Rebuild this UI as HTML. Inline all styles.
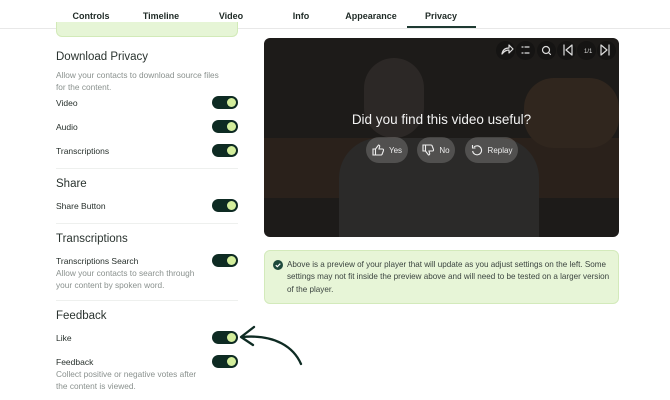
<!DOCTYPE html>
<html><head><meta charset="utf-8"><style>
*{margin:0;padding:0;box-sizing:border-box}
body{width:670px;height:400px;overflow:hidden;background:#fff;font-family:"Liberation Sans",sans-serif;color:#1f2a26;position:relative}
.a{position:absolute}
.tab{position:absolute;top:11px;width:70px;text-align:center;font-size:9px;font-weight:bold;color:#1f2a26}
.h{font-size:11.5px;color:#2a332f}
.l{font-size:8.5px;color:#27302c}
.d{font-size:8.3px;color:#8a918e;line-height:12px}
.tg{position:absolute;left:212px;width:26px;height:13px;border-radius:7px;background:#0e2b23}
.tg:after{content:"";position:absolute;right:2px;top:2px;width:9px;height:9px;border-radius:50%;background:#d3ee9c}
.hr{position:absolute;left:56px;width:182px;height:1px;background:#eef0ee}
.btn{position:absolute;top:99px;height:26px;border-radius:13px;background:rgba(255,255,255,.18);color:#eee;font-size:8px;display:flex;align-items:center;justify-content:center;gap:5px}
.ci{position:absolute;top:3px;width:19px;height:19px;border-radius:50%;background:#151413}
</style></head><body>
<div class="tab" style="left:56px">Controls</div>
<div class="tab" style="left:126px">Timeline</div>
<div class="tab" style="left:196px">Video</div>
<div class="tab" style="left:266px">Info</div>
<div class="tab" style="left:336px">Appearance</div>
<div class="tab" style="left:406px">Privacy</div>
<div class="a" style="left:0;top:28px;width:670px;height:1px;background:#e8e8e8"></div>
<div class="a" style="left:407px;top:26px;width:69px;height:2px;background:#1e3a32"></div>
<div class="a" style="left:56px;top:22px;width:182px;height:15px;background:#e6f5d6;border:1px solid #d2eab8;border-top:none;border-radius:0 0 6px 6px"></div>

<div class="a h" style="left:56px;top:51px">Download Privacy</div>
<div class="a d" style="left:56px;top:69px;width:170px">Allow your contacts to download source files for the content.</div>
<div class="a l" style="left:56px;top:98px">Video</div><div class="tg" style="top:96px"></div>
<div class="a l" style="left:56px;top:122px">Audio</div><div class="tg" style="top:120px"></div>
<div class="a l" style="left:56px;top:146px">Transcriptions</div><div class="tg" style="top:144px"></div>
<div class="hr" style="top:168px"></div>
<div class="a h" style="left:56px;top:178px">Share</div>
<div class="a l" style="left:56px;top:201px">Share Button</div><div class="tg" style="top:199px"></div>
<div class="hr" style="top:223px"></div>
<div class="a h" style="left:56px;top:233px">Transcriptions</div>
<div class="a l" style="left:56px;top:256px">Transcriptions Search</div><div class="tg" style="top:254px"></div>
<div class="a d" style="left:56px;top:267px;width:150px">Allow your contacts to search through your content by spoken word.</div>
<div class="hr" style="top:300px"></div>
<div class="a h" style="left:56px;top:310px">Feedback</div>
<div class="a l" style="left:56px;top:333px">Like</div><div class="tg" style="top:331px"></div>
<div class="a l" style="left:56px;top:357px">Feedback</div><div class="tg" style="top:355px"></div>
<div class="a d" style="left:56px;top:368px;width:150px">Collect positive or negative votes after the content is viewed.</div>
<svg class="a" style="left:236px;top:322px" width="70" height="46"><path d="M65 42 C58 26 40 12 6 15" fill="none" stroke="#0e2b23" stroke-width="2.3" stroke-linecap="round"/><path d="M18 5 L5 15 L17 23" fill="none" stroke="#0e2b23" stroke-width="2.3" stroke-linecap="round" stroke-linejoin="round"/></svg>

<div class="a" style="left:264px;top:38px;width:355px;height:199px;border-radius:6px;overflow:hidden;background:#1d1b19">
<div class="a" style="left:0;top:100px;width:355px;height:60px;background:#2a211b"></div>
<div class="a" style="left:260px;top:40px;width:95px;height:70px;background:#30261e;border-radius:30px"></div>
<div class="a" style="left:100px;top:20px;width:60px;height:80px;background:#2c2826;border-radius:30px"></div>
<div class="a" style="left:75px;top:100px;width:200px;height:99px;background:#2b2a29;border-radius:40px 40px 0 0"></div>
<div class="ci" style="left:232px"></div><div class="ci" style="left:252px"></div><div class="ci" style="left:273px"></div><div class="ci" style="left:293px"></div><div class="ci" style="left:313px"></div><div class="ci" style="left:333px"></div>
<svg class="a" style="left:236px;top:4px" width="110" height="16" fill="none" stroke="#ddd" stroke-width="1.2" stroke-linecap="round" stroke-linejoin="round">
<path d="M2 12 Q3 6 9 6 L9 3 L13 7 L9 11 L9 8 Q5 8 2 12"/>
<path d="M22 5h1M22 11h1M25 5h4M25 11h4"/>
<circle cx="46" cy="8" r="3.5"/><path d="M49 11l1.5 1.5"/>
<path d="M64 3v10M72 3l-6 5 6 5z"/>
<text x="84" y="11" font-size="6" fill="#ddd" stroke="none" font-family="Liberation Sans">1/1</text>
<path d="M101 3l6 5-6 5zM109 3v10"/></svg>
<div class="a" style="left:0;top:74px;width:355px;text-align:center;color:#f2f2f2;font-size:13.5px">Did you find this video useful?</div>
<div class="btn" style="left:102px;width:42px"><svg width="12" height="12" fill="none" stroke="#eee" stroke-width="1.1"><path d="M1 5h2.5v6H1zM3.5 5l3-4c1 0 1.5 1 1 2l-.5 2h3.5c1 0 1.3 1 1 1.5l-1.5 4c-.3.5-.7.5-1 .5H3.5"/></svg>Yes</div>
<div class="btn" style="left:153px;width:38px"><svg width="12" height="12" fill="none" stroke="#eee" stroke-width="1.1"><path d="M1 1h2.5v6H1zM3.5 7l3 4c1 0 1.5-1 1-2l-.5-2h3.5c1 0 1.3-1 1-1.5l-1.5-4c-.3-.5-.7-.5-1-.5H3.5"/></svg>No</div>
<div class="btn" style="left:201px;width:53px"><svg width="12" height="12" fill="none" stroke="#eee" stroke-width="1.1"><path d="M3 3A4.5 4.5 0 1 1 1.6 7M1.5 1v3h3"/></svg>Replay</div>
</div>

<div class="a" style="left:264px;top:250px;width:355px;height:54px;background:#e7f5d7;border:1px solid #d3eabb;border-radius:6px"></div>
<svg class="a" style="left:273px;top:260px" width="10" height="10"><circle cx="5" cy="5" r="5" fill="#1e4a3c"/><path d="M2.8 5.2l1.5 1.5 3-3" fill="none" stroke="#fff" stroke-width="1.2"/></svg>
<div class="a" style="left:287px;top:259px;width:326px;font-size:8.1px;line-height:12.3px;color:#3a433f">Above is a preview of your player that will update as you adjust settings on the left. Some settings may not fit inside the preview above and will need to be tested on a larger version of the player.</div>
</body></html>
